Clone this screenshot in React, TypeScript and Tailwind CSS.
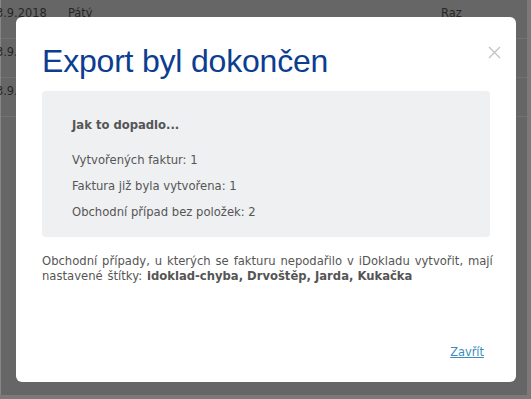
import React from 'react';

const rows = [
    { date: '3.9.2018', day: 'Pátý', who: 'Raz' },
    { date: '3.9.2018', day: 'Pátý', who: 'Raz' },
    { date: '3.9.2018', day: 'Pátý', who: 'Raz' },
];

const body = { fontFamily: '"DejaVu Sans", Verdana, sans-serif' };

export default function App() {
    return (
        <div
            className="relative w-[531px] h-[399px] overflow-hidden bg-[#7a7a7a]"
            style={{ fontFamily: '"Liberation Sans", Arial, sans-serif' }}
        >
            {/* page behind the overlay */}
            <div className="w-[527px] h-[395px] bg-[#666666] border-l border-[#858585]" style={body}>
                {rows.map((r, i) => (
                    <div
                        key={i}
                        className="flex h-[39px] items-start pt-[5px] text-[11.4px] leading-[16px] text-[#262626] border-b border-[#717171]"
                    >
                        <span className="w-[72px] -ml-[5px] shrink-0 whitespace-nowrap">{r.date}</span>
                        <span className="w-[373px] shrink-0">{r.day}</span>
                        <span>{r.who}</span>
                    </div>
                ))}
            </div>

            {/* modal */}
            <div className="absolute left-[16px] top-[17px] w-[500px] h-[365px] bg-white rounded-[6px] px-[26px] pt-[26px] flex flex-col">
                <button className="absolute right-[15px] top-[29px] text-[#c4c4c4]">
                    <svg width="13" height="13" viewBox="0 0 13 13" fill="none" stroke="currentColor" strokeWidth="1.4">
                        <path d="M1 1 L12 12 M12 1 L1 12" />
                    </svg>
                </button>

                <h1 className="text-[32px] leading-[36px] text-[#0c3d8f] tracking-[-0.2px]">Export byl dokončen</h1>

                <div
                    className="mt-[12px] bg-[#eff0f2] rounded-[4px] pt-[26px] pb-[17px] px-[30px] text-[11.6px] leading-[16px] text-[#555555]"
                    style={body}
                >
                    <div className="font-bold">Jak to dopadlo...</div>
                    <div className="mt-[19px]">Vytvořených faktur: 1</div>
                    <div className="mt-[10px]">Faktura již byla vytvořena: 1</div>
                    <div className="mt-[10px]">Obchodní případ bez položek: 2</div>
                </div>

                <p className="mt-[17px] -mr-[20px] text-[11.6px] leading-[15px] text-[#555555] [word-spacing:1.2px]" style={body}>
                    Obchodní případy, u kterých se fakturu nepodařilo v iDokladu vytvořit, mají
                    <br />
                    nastavené štítky: <b className="[word-spacing:0px]">idoklad-chyba, Drvoštěp, Jarda, Kukačka</b>
                </p>

                <div className="mt-auto mb-[22px] flex justify-end pr-[6px]" style={body}>
                    <a href="#" className="text-[11.4px] leading-[16px] text-[#3a8cc0] underline">Zavřít</a>
                </div>
            </div>
        </div>
    );
}
